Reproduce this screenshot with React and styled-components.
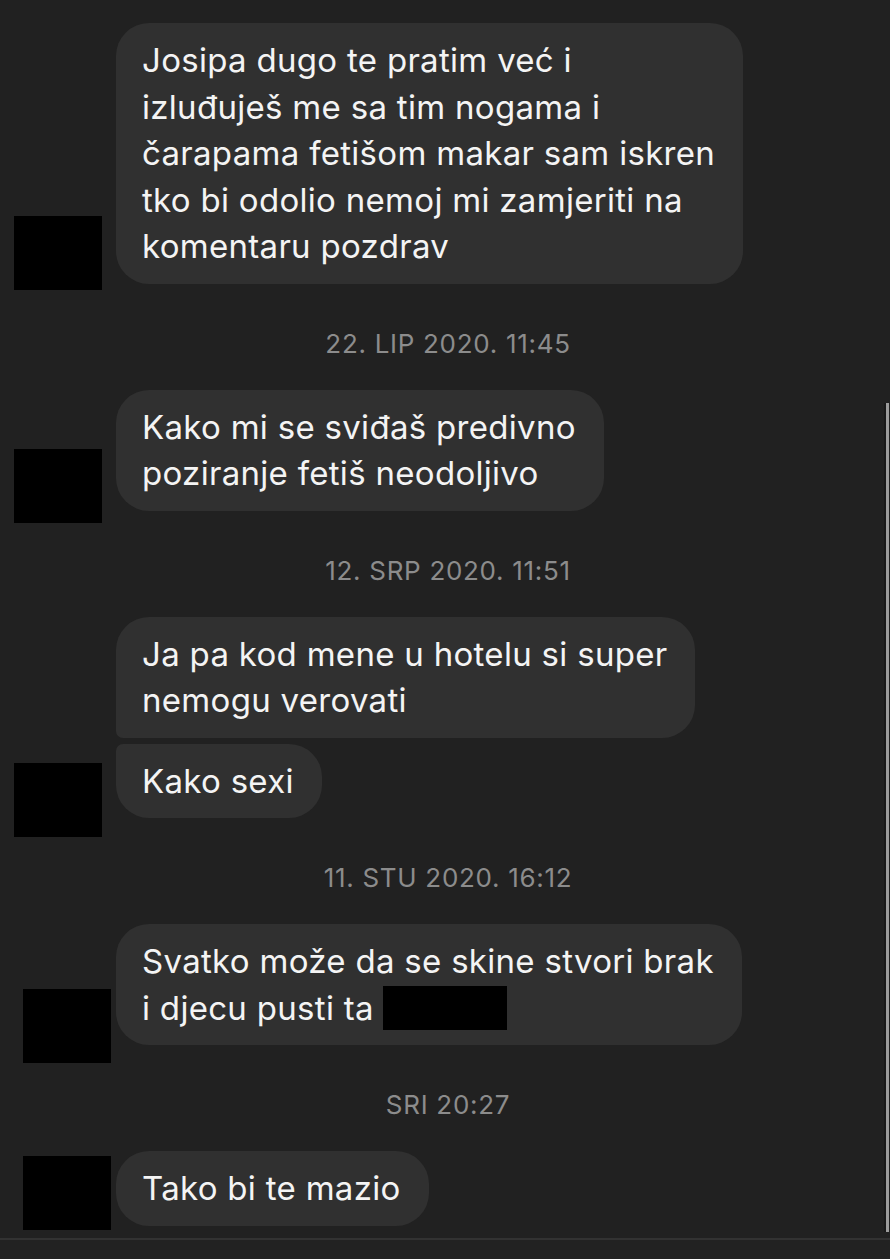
import React from 'react'
import styled, { createGlobalStyle } from 'styled-components'

const GlobalStyle = createGlobalStyle`
  html, body {
    margin: 0;
    padding: 0;
    background: #212121;
  }
  * {
    box-sizing: border-box;
  }
`

const Screen = styled.div`
  position: relative;
  display: flex;
  flex-direction: column;
  width: 890px;
  height: 1259px;
  overflow: hidden;
  background: #212121;
  font-family: Inter, 'Noto Sans', 'DejaVu Sans', sans-serif;
`

const Thread = styled.div`
  flex: 1;
  display: flex;
  flex-direction: column;
  padding-top: 23px;
  overflow: hidden;
`

const Row = styled.div`
  display: flex;
  align-items: flex-end;
`

// black box that hides the sender's avatar
const Avatar = styled.div`
  flex-shrink: 0;
  width: 88px;
  height: 74px;
  margin-left: ${p => p.$left}px;
  margin-right: ${p => 116 - 88 - p.$left}px;
  margin-bottom: -${p => p.$drop}px;
  background: #000;
`

const Stack = styled.div`
  display: flex;
  flex-direction: column;
  align-items: flex-start;
  gap: 6px;
`

const Bubble = styled.div`
  padding: 14px 28px 14px 26px;
  background: #303030;
  border-radius: 33px;
  border-top-left-radius: ${p => (p.$joinTop ? '7px' : '33px')};
  border-bottom-left-radius: ${p => (p.$joinBottom ? '7px' : '33px')};
  color: #f4f4f4;
  font-size: 33px;
  line-height: 46.5px;
  letter-spacing: 0.3px;
  span {
    display: block;
    white-space: nowrap;
  }
`

const Hidden = styled.i`
  display: inline-block;
  width: 124px;
  height: 44px;
  vertical-align: -10px;
  background: #000;
`

const Stamp = styled.div`
  margin: 46px 0 32px;
  padding-left: 6px;
  text-align: center;
  color: #8c8c8c;
  font-size: 26px;
  line-height: 28px;
  letter-spacing: 0.7px;
`

const Footer = styled.div`
  height: 21px;
  border-top: 2px solid #323232;
  background: #222222;
`

const Scrollbar = styled.div`
  position: absolute;
  top: 403px;
  right: 1px;
  width: 5px;
  height: 829px;
  border-left: 2px solid #191919;
  background: #9c9c9c;
`

const messages = [
  {
    avatar: { left: 14, drop: 6 },
    bubbles: [[
      'Josipa dugo te pratim već i',
      'izluđuješ me sa tim nogama i',
      'čarapama fetišom makar sam iskren',
      'tko bi odolio nemoj mi zamjeriti na',
      'komentaru pozdrav',
    ]],
  },
  { stamp: '22. LIP 2020. 11:45' },
  {
    avatar: { left: 14, drop: 12 },
    bubbles: [['Kako mi se sviđaš predivno', 'poziranje fetiš neodoljivo']],
  },
  { stamp: '12. SRP 2020. 11:51' },
  {
    avatar: { left: 14, drop: 19 },
    bubbles: [['Ja pa kod mene u hotelu si super', 'nemogu verovati'], ['Kako sexi']],
  },
  { stamp: '11. STU 2020. 16:12' },
  {
    avatar: { left: 23, drop: 18 },
    bubbles: [['Svatko može da se skine stvori brak', 'i djecu pusti ta ']],
    redacted: true,
  },
  { stamp: 'SRI 20:27' },
  {
    avatar: { left: 23, drop: 4 },
    bubbles: [['Tako bi te mazio']],
  },
]

const App = () => {
  return (
    <Screen>
      <GlobalStyle />
      <Thread>
        {messages.map((item, idx) => {
          if (item.stamp) return <Stamp key={idx}>{item.stamp}</Stamp>
          const count = item.bubbles.length
          return (
            <Row key={idx}>
              <Avatar $left={item.avatar.left} $drop={item.avatar.drop} />
              <Stack>
                {item.bubbles.map((lines, bIdx) => (
                  <Bubble key={bIdx} $joinTop={bIdx > 0} $joinBottom={bIdx < count - 1}>
                    {lines.map((line, lIdx) => (
                      <span key={lIdx}>
                        {line}
                        {item.redacted && lIdx === lines.length - 1 && <Hidden />}
                      </span>
                    ))}
                  </Bubble>
                ))}
              </Stack>
            </Row>
          )
        })}
      </Thread>
      <Footer />
      <Scrollbar />
    </Screen>
  )
}

export default App
